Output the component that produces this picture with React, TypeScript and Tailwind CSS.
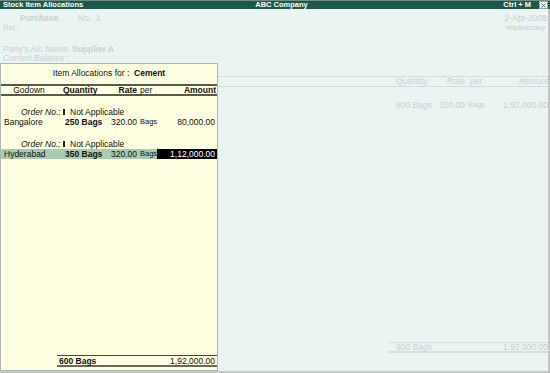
const font = { fontFamily: '"Liberation Sans", Arial, sans-serif' };

function CloseBox() {
  return (
    <div className="w-[9px] h-[8px] bg-[#f4f4f4] border border-[#9aa] flex items-center justify-center">
      <svg width="5" height="5" viewBox="0 0 5 5">
        <path d="M0.5 0.5L4.5 4.5M4.5 0.5L0.5 4.5" stroke="#555" strokeWidth="0.9" />
      </svg>
    </div>
  );
}

function AllocRow({
  godown,
  qty,
  amount,
  selected,
}: {
  godown: string;
  qty: string;
  amount: string;
  selected?: boolean;
}) {
  const hl = selected ? 'bg-[#a9cbb0]' : '';
  return (
    <>
      <div className="flex items-center h-[10px] leading-[10px] pl-[20px]">
        <span className="italic w-[42px] whitespace-nowrap">Order No.:</span>
        <span className="inline-block w-[2px] h-[6px] bg-[#222] mr-[5px]" />
        <span>Not Applicable</span>
      </div>
      <div className="grid grid-cols-[60px_44px_35px_17px_1fr] h-[10px] leading-[10px]">
        <div className={`pl-[3px] ${hl}`}>{godown}</div>
        <div className={`pl-[4px] font-bold ${hl}`}>{qty}</div>
        <div className={`text-right pr-[3px] ${hl}`}>320.00</div>
        <div className={`text-[7.5px] ${hl}`}>Bags</div>
        <div className={`text-right pr-[2px] ${selected ? 'bg-black text-white' : ''}`}>{amount}</div>
      </div>
    </>
  );
}

function AllocationPanel() {
  return (
    <div className="absolute left-0 top-[54px] bottom-0 w-[218px] bg-[#ffffe1] border border-[#a8b8b4] flex flex-col text-[8.5px] text-[#111]">
      <div className="h-[10px] leading-[10px] mt-[4px] text-center">
        Item Allocations for : &nbsp;<span className="font-bold">Cement</span>
      </div>
      <div className="mt-[6px] border-t-2 border-b-2 border-[#5a5a4a] grid grid-cols-[56px_48px_35px_17px_1fr] h-[12px] leading-[8px]">
        <div className="text-center">Godown</div>
        <div className="pl-[6px] font-bold">Quantity</div>
        <div className="text-right pr-[3px] font-bold">Rate</div>
        <div>per</div>
        <div className="text-right pr-[1px] font-bold">Amount</div>
      </div>
      <div className="mt-[11px]">
        <AllocRow godown="Bangalore" qty="250 Bags" amount="80,000.00" />
      </div>
      <div className="mt-[12px]">
        <AllocRow godown="Hyderabad" qty="350 Bags" amount="1,12,000.00" selected />
      </div>
      <div className="mt-auto mb-[3px] ml-[56px] border-t border-[#4a4a3a] border-b-2 border-b-[#6a6a5a] flex justify-between h-[12px] leading-[10px] pl-[2px] pr-[2px]">
        <span className="font-bold">600 Bags</span>
        <span>1,92,000.00</span>
      </div>
    </div>
  );
}

export default function App() {
  return (
    <div className="w-[550px] h-[373px] flex flex-col bg-[#eaf4f3] overflow-hidden" style={font}>
      <div className="h-[9px] bg-[#1b5a49] border-t border-[#6f8f86] flex items-center text-white text-[7.5px] font-bold leading-[8px]">
        <div className="flex-1 pl-[3px]">Stock Item Allocations</div>
        <div className="flex-1 text-center pl-[12px]">ABC Company</div>
        <div className="flex-1 flex justify-end items-center gap-[8px] pr-[2px]">
          <span>Ctrl + M</span>
          <CloseBox />
        </div>
      </div>
      <div className="flex-1 relative border-r-2 border-b-2 border-[#c4c9c8] flex flex-col text-[8.5px] text-[#c9d1d0]">
        <div className="flex h-[10px] leading-[10px] mt-[4px]">
          <span className="pl-[20px] w-[78px] font-bold">Purchase</span>
          <span>No.&nbsp;&nbsp;1</span>
          <span className="ml-auto pr-[1px]">2-Apr-2008</span>
        </div>
        <div className="flex h-[10px] leading-[10px] text-[7.5px]">
          <span className="pl-[3px]">Ref.:</span>
          <span className="ml-auto pr-[3px]">Wednesday</span>
        </div>
        <div className="flex h-[10px] leading-[10px] mt-[11px] pl-[3px]">
          <span className="w-[69px]">Party&apos;s A/c Name :</span>
          <span className="font-bold">Supplier A</span>
        </div>
        <div className="h-[9px] leading-[9px] pl-[3px]">
          Current <span className="italic">Balance</span> :
        </div>
        <div className="mt-[13px] border-t border-b border-[#d3dddc] grid grid-cols-[1fr_42px_32px_20px_60px] h-[11px] leading-[9px]">
          <div />
          <div className="pl-[2px]">Quantity</div>
          <div className="text-right pr-[3px]">Rate</div>
          <div className="pl-[2px]">per</div>
          <div className="text-right">Amount</div>
        </div>
        <div className="mt-[13px] grid grid-cols-[1fr_42px_32px_20px_60px] h-[10px] leading-[10px]">
          <div />
          <div className="pl-[2px]">600 Bags</div>
          <div className="text-right pr-[3px]">320.00</div>
          <div className="text-[7.5px]">Bags</div>
          <div className="text-right">1,92,000.00</div>
        </div>
        <div className="mt-auto mb-[18px] ml-auto w-[159px] border-t border-b-2 border-[#d6dfde] flex justify-between h-[11px] leading-[9px] pl-[7px]">
          <span>600 Bags</span>
          <span>1,92,000.00</span>
        </div>
        <AllocationPanel />
      </div>
    </div>
  );
}
